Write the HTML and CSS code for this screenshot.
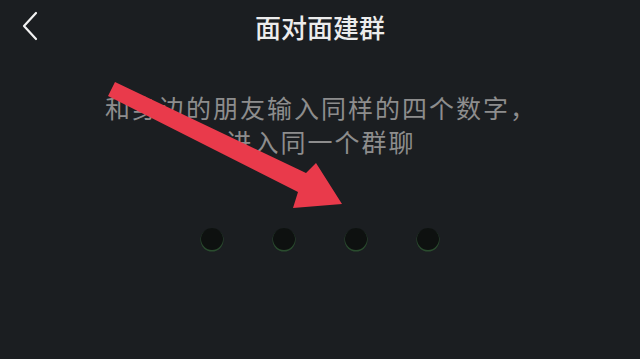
FILE: index.html
```html
<!DOCTYPE html>
<html lang="zh-CN">
<head>
  <meta charset="UTF-8" />
  <meta name="viewport" content="width=device-width, initial-scale=1.0"/>
  <title>面对面建群</title>
  <link rel="stylesheet" href="styles.css">
</head>
<body>
  <div class="screen">
    <header class="top-bar">
      <button class="back-btn" aria-label="返回">
        <svg width="18" height="30" viewBox="0 0 18 30">
          <polyline points="15,2 3,15 15,28" fill="none" stroke="#f2f2f2" stroke-width="2.2" stroke-linecap="round" stroke-linejoin="round"/>
        </svg>
      </button>
      <h1 class="title">面对面建群</h1>
    </header>

    <p class="hint">和身边的朋友输入同样的四个数字，<br>进入同一个群聊</p>

    <div class="code-dots">
      <span class="dot"></span>
      <span class="dot"></span>
      <span class="dot"></span>
      <span class="dot"></span>
    </div>

    <!-- red arrow drawn over the page -->
    <svg class="arrow" width="640" height="359" viewBox="0 0 640 359">
      <polygon points="115,82 306,173 316,163 342,204 293,208 298,192 108,96" fill="#e93a4b"/>
    </svg>
  </div>
</body>
</html>
```

FILE: styles.css
```css
body {
  margin: 0;
  background: #1b1e21;
  font-family: "Noto Sans CJK SC", "Noto Sans", sans-serif;
  overflow: hidden;
}

.screen {
  position: relative;
  width: 640px;
  height: 359px;
}

.top-bar {
  height: 54px;
  display: flex;
  align-items: center;
  justify-content: center;
  position: relative;
}

.back-btn {
  position: absolute;
  left: 21px;
  top: 11px;
  padding: 0;
  border: none;
  background: none;
  width: 18px;
  height: 30px;
}

.title {
  margin: 0 0 2px;
  color: #ececec;
  font-size: 26px;
  font-weight: 500;
}

.hint {
  margin: 36px 0 0;
  padding-left: 2px;
  text-align: center;
  color: #8d8d8d;
  font-size: 25px;
  line-height: 34px;
  letter-spacing: 2px;
}

.code-dots {
  display: flex;
  justify-content: center;
  gap: 50px;
  margin-top: 70px;
}

.dot {
  width: 22px;
  height: 22px;
  border-radius: 50%;
  background: #0e1110;
  box-shadow: 0 1px 0 0.5px #2a4c2e;
}

.arrow {
  position: absolute;
  left: 0;
  top: 0;
  pointer-events: none;
}
```
